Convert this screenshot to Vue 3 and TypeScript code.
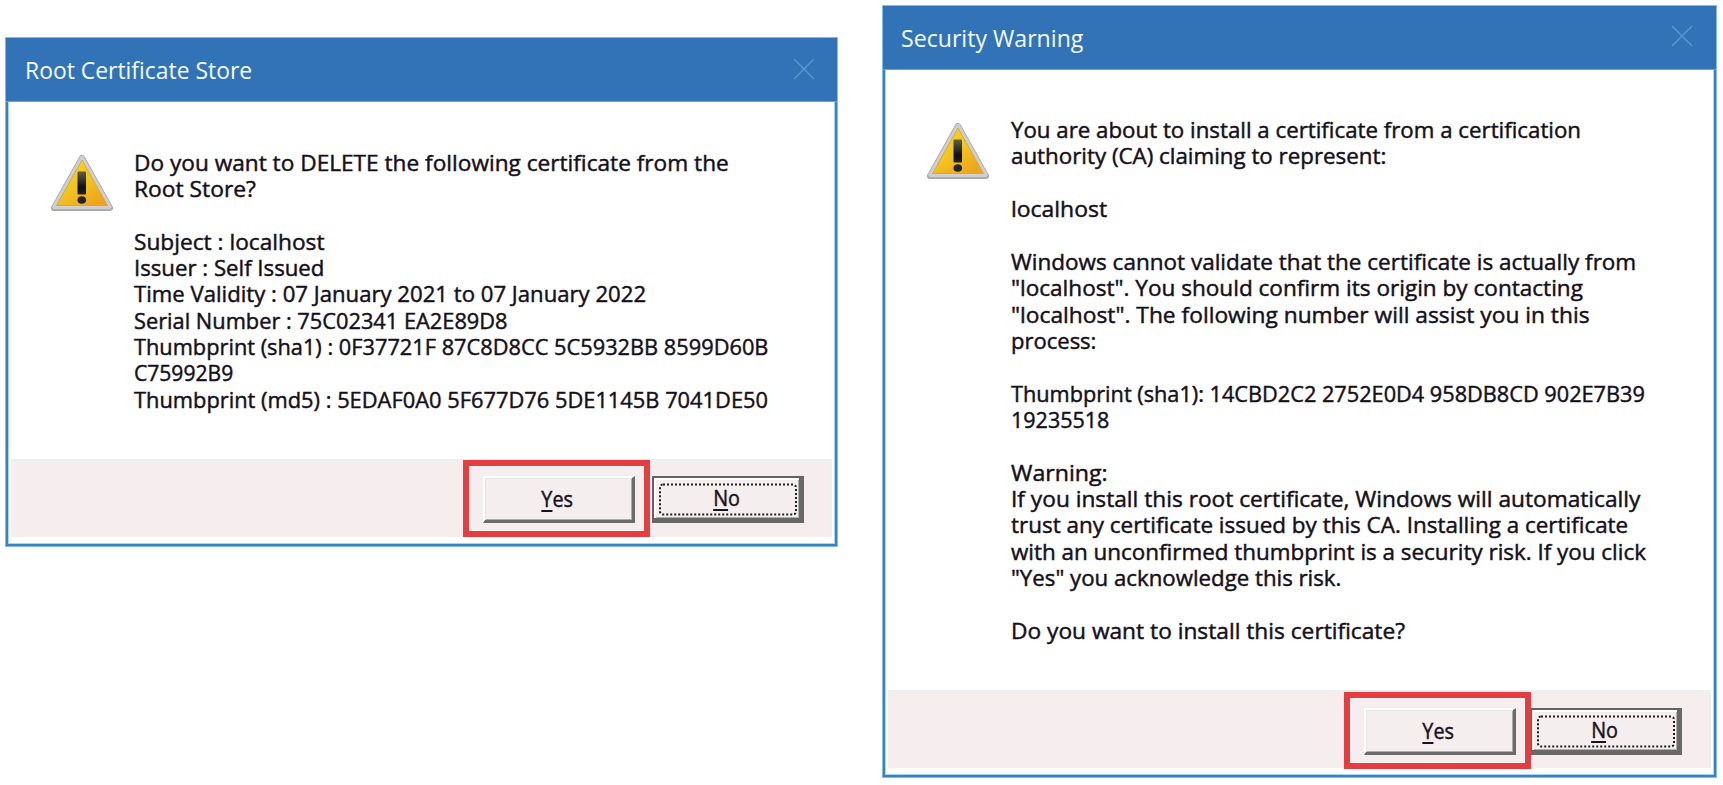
<script setup lang="ts">
import { ref } from 'vue'

interface Line { text: string; width?: number }
interface Dialog { id: string; title: string; titleWidth: number; lines: Line[] }

const dialogs = ref<Dialog[]>([
  {
    id: 'delete',
    title: 'Root Certificate Store',
    titleWidth: 227,
    lines: [
      { text: 'Do you want to DELETE the following certificate from the', width: 595 },
      { text: 'Root Store?', width: 122 },
      { text: '' },
      { text: 'Subject : localhost', width: 190 },
      { text: 'Issuer : Self Issued', width: 190 },
      { text: 'Time Validity : 07 January 2021 to 07 January 2022', width: 512 },
      { text: 'Serial Number : 75C02341 EA2E89D8', width: 374 },
      { text: 'Thumbprint (sha1) : 0F37721F 87C8D8CC 5C5932BB 8599D60B', width: 634 },
      { text: 'C75992B9', width: 99 },
      { text: 'Thumbprint (md5) : 5EDAF0A0 5F677D76 5DE1145B 7041DE50', width: 634 },
    ],
  },
  {
    id: 'install',
    title: 'Security Warning',
    titleWidth: 182,
    lines: [
      { text: 'You are about to install a certificate from a certification', width: 570 },
      { text: 'authority (CA) claiming to represent:', width: 375 },
      { text: '' },
      { text: 'localhost', width: 96 },
      { text: '' },
      { text: 'Windows cannot validate that the certificate is actually from', width: 625 },
      { text: '"localhost". You should confirm its origin by contacting', width: 572 },
      { text: '"localhost". The following number will assist you in this', width: 579 },
      { text: 'process:', width: 85 },
      { text: '' },
      { text: 'Thumbprint (sha1): 14CBD2C2 2752E0D4 958DB8CD 902E7B39', width: 634 },
      { text: '19235518', width: 98 },
      { text: '' },
      { text: 'Warning:', width: 97 },
      { text: 'If you install this root certificate, Windows will automatically', width: 629 },
      { text: 'trust any certificate issued by this CA. Installing a certificate', width: 617 },
      { text: 'with an unconfirmed thumbprint is a security risk. If you click', width: 635 },
      { text: '"Yes" you acknowledge this risk.', width: 330 },
      { text: '' },
      { text: 'Do you want to install this certificate?', width: 394 },
    ],
  },
])

// Stretches a line of text horizontally to its intended width.
const vFit = {
  mounted(el: HTMLElement, binding: { value?: number }) {
    if (binding.value) el.style.transform = `scaleX(${binding.value / el.offsetWidth})`
  },
}
</script>

<template>
  <main class="desktop">
    <section v-for="d in dialogs" :key="d.id" class="dialog" :class="d.id">
      <header class="titlebar">
        <span v-fit="d.titleWidth" class="title">{{ d.title }}</span>
        <svg class="close" width="22" height="22" viewBox="0 0 22 22">
          <path d="M1 1 L21 21 M21 1 L1 21" />
        </svg>
      </header>
      <div class="body">
        <svg class="warning" width="64" height="58" viewBox="0 0 64 58">
          <defs>
            <linearGradient :id="d.id + '-fill'" x1="0" y1="0" x2="0.7" y2="1">
              <stop offset="0" stop-color="#f6d52c" />
              <stop offset="0.55" stop-color="#f4c51f" />
              <stop offset="1" stop-color="#eda51e" />
            </linearGradient>
            <linearGradient :id="d.id + '-bar'" x1="0" y1="0" x2="0" y2="1">
              <stop offset="0" stop-color="#62603f" />
              <stop offset="0.3" stop-color="#3b3c3c" />
              <stop offset="0.7" stop-color="#0d0e18" />
              <stop offset="1" stop-color="#24221c" />
            </linearGradient>
          </defs>
          <path d="M32 4 L60 54 H4 Z" fill="#a5a5aa" stroke="#a5a5aa" stroke-width="6" stroke-linejoin="round" />
          <path d="M32 4 L59.500 53 H4.500 Z" fill="#cfcfd3" stroke="#cfcfd3" stroke-width="4.500" stroke-linejoin="round" />
          <path d="M32 6 L57.500 51.500 H6.500 Z" :fill="`url(#${d.id}-fill)`" stroke="#d3ad3b" stroke-width="1" stroke-linejoin="round" />
          <rect x="27.500" y="17.500" width="8.500" height="23" rx="1" :fill="`url(#${d.id}-bar)`" />
          <ellipse cx="31.800" cy="46" rx="4.300" ry="3.800" fill="#24232a" />
        </svg>
        <div class="message">
          <p v-for="(l, i) in d.lines" :key="i" class="line"><span v-fit="l.width">{{ l.text }}</span></p>
        </div>
      </div>
      <footer class="footer">
        <div class="button yes"><span><u>Y</u>es</span></div>
        <div class="button no">
          <svg class="focus" width="138" height="33" viewBox="0 0 138 33">
            <rect x="1" y="1.500" width="136" height="30" rx="3" />
          </svg>
          <span><u>N</u>o</span>
        </div>
      </footer>
    </section>
  </main>
</template>

<style>
body { margin: 0; background: #fff; }
</style>

<style scoped>
.desktop {
  box-sizing: border-box;
  width: 1723px;
  height: 785px;
  padding: 5px 6px 0 5px;
  display: flex;
  justify-content: space-between;
  align-items: flex-start;
  font-family: "Open Sans", "Noto Sans", sans-serif;
  background: #fff;
  overflow: hidden;
}
.dialog {
  box-sizing: border-box;
  display: flex;
  flex-direction: column;
  border: 1px solid #82bce6;
  background: #fff;
  box-shadow: inset 0 0 0 2px #3b81bc, inset 0 0 0 3px #a3d6f7;
}
.delete { width: 833px; height: 510px; margin-top: 32px; }
.install { width: 835px; height: 773px; }
.titlebar {
  box-sizing: border-box;
  flex: none;
  height: 64px;
  background: #3273b7;
  border-bottom: 1px solid #65a5dc;
  display: flex;
  justify-content: space-between;
  align-items: flex-start;
  padding: 16px 22px 0 19px;
}
.install .titlebar { padding-left: 18px; }
.title {
  color: #f2faff;
  font-size: 24px;
  line-height: 32px;
  white-space: nowrap;
  transform-origin: 0 0;
}
.close { margin-top: 4px; }
.install .close { margin-right: 1px; margin-top: 3px; }
.close path { stroke: #5399cf; stroke-width: 1.5; fill: none; }
.body {
  flex: 1;
  display: flex;
  align-items: flex-start;
  padding-left: 44px;
}
.install .body { padding-left: 42.500px; }
.warning { margin-top: 52px; flex: none; }
.install .warning { margin-top: 51.500px; }
.message { margin: 47.500px 0 0 19.500px; }
.install .message { margin: 47px 0 0 21.500px; }
.line {
  margin: 0;
  height: 26.370px;
  line-height: 26.370px;
  font-size: 21.500px;
  color: #15101c;
  white-space: nowrap;
  -webkit-text-stroke: 0.450px #15101c;
}
.line span { display: inline-block; transform-origin: 0 0; }
.footer {
  box-sizing: border-box;
  flex: none;
  height: 78px;
  margin: 0 5px 9px;
  background: #f6eeee;
  border: solid #eeefef;
  border-width: 4px 3px 0 0;
  display: flex;
  justify-content: flex-end;
  gap: 17px;
  padding: 13px 25px 0 0;
}
.install .footer { margin-bottom: 9px; padding-right: 26px; padding-top: 14px; gap: 14px; }
.button {
  box-sizing: border-box;
  position: relative;
  width: 152px;
  height: 47px;
  display: flex;
  align-items: center;
  justify-content: center;
  font-size: 21.500px;
  color: #17131f;
  background: #f5eeee;
}
.install .no { width: 152px; }
.button span { transform: scaleX(0.92); padding-bottom: 2px; -webkit-text-stroke: 0.450px #17131f; }
.button u { text-decoration-thickness: 2px; text-underline-offset: 3px; text-decoration-skip-ink: none; }
.yes {
  border: solid;
  border-width: 2px 3px 3px 2px;
  border-color: #fff #6b6b6b #6b6b6b #fff;
  box-shadow: inset 1px 1px 0 #e5e5e5, inset -1px -1px 0 #aaa;
  padding-right: 3px;
}
.yes::after {
  content: "";
  position: absolute;
  left: -22px;
  top: -18px;
  width: 175px;
  height: 65px;
  border: 6px solid #e63e40;
  box-shadow: inset 0 0 0 1px #fff8f8;
  z-index: 2;
}
.no {
  border: solid;
  border-width: 2px 5px 5px 2px;
  border-color: #636363 #686868 #686868 #636363;
  box-shadow: inset 2px 2px 0 #fff, inset -1px -1px 0 #b0b0b0;
  padding-left: 1px;
}
.focus { position: absolute; left: 5px; top: 5px; }
.focus rect { fill: none; stroke: #1d1d1d; stroke-width: 2; stroke-dasharray: 2 2; }
</style>
